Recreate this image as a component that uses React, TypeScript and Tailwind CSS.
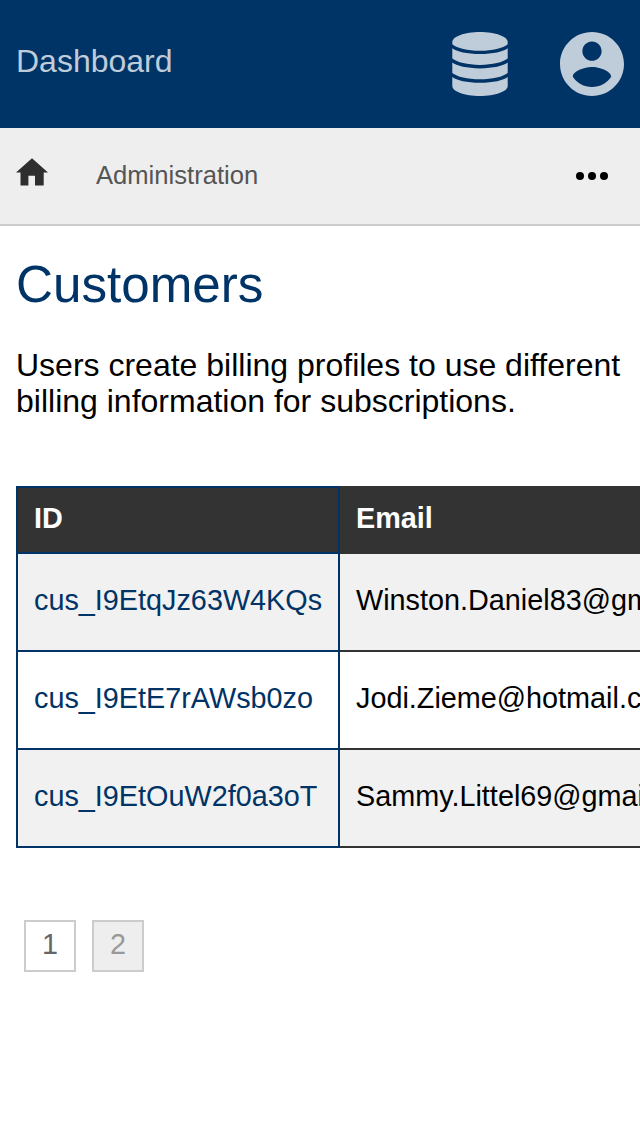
import React from "react";

const customers = [
  { id: "cus_I9EtqJz63W4KQs", email: "Winston.Daniel83@gmail.com" },
  { id: "cus_I9EtE7rAWsb0zo", email: "Jodi.Zieme@hotmail.com" },
  { id: "cus_I9EtOuW2f0a3oT", email: "Sammy.Littel69@gmail.com" },
];

function DatabaseIcon() {
  return (
    <svg viewBox="0 0 56 64" className="h-16 w-14" fill="currentColor">
      <path d="M.3 10C.3 4.500 12.700 0 28 0s27.700 4.500 27.700 10v2.300C51 16.200 40.500 18.800 28 18.800S5 16.200.3 12.300z" />
      <path d="M.3 16.200C4.500 19.600 15 22 28 22s23.500-2.400 27.700-5.800v10.400C51 30.400 40.500 32.900 28 32.900S5 30.400.3 26.600z" />
      <path d="M.3 30.600C4.500 34 15 36.400 28 36.400s23.500-2.400 27.700-5.800v10.400C51 44.800 40.500 47.300 28 47.300S5 44.800.3 41z" />
      <path d="M.3 45C4.500 48.400 15 50.800 28 50.800s23.500-2.400 27.700-5.800v9C55.700 59.500 43.300 64 28 64S.3 59.500.3 54z" />
    </svg>
  );
}

export default function App() {
  return (
    <div className="h-[1136px] w-[640px] overflow-hidden bg-white font-['Liberation_Sans',sans-serif] text-black">
      <header className="flex h-32 items-center justify-between bg-[#003366] px-4 text-[#bfccd9]">
        <a className="pb-1.5 text-[32px] leading-9">Dashboard</a>
        <div className="flex items-center gap-[52px]">
          <DatabaseIcon />
          <svg viewBox="2 2 20 20" className="size-16" fill="currentColor">
            <path d="M12 2C6.48 2 2 6.48 2 12s4.48 10 10 10 10-4.48 10-10S17.52 2 12 2zm0 3c1.66 0 3 1.34 3 3s-1.34 3-3 3-3-1.34-3-3 1.34-3 3-3zm0 14.2c-2.5 0-4.71-1.28-6-3.22.03-1.99 4-3.08 6-3.08 1.99 0 5.97 1.09 6 3.08-1.29 1.94-3.5 3.22-6 3.22z" />
          </svg>
        </div>
      </header>
      <nav className="flex h-[98px] items-center border-b-2 border-[#cccccc] bg-[#eeeeee] px-4">
        <svg viewBox="0 0 32 28" className="mb-2 h-7 w-8 fill-[#2e2e2e]">
          <path d="M12.400 27.600v-9.900H19v9.900h8.700V14.600H32L16 .3 0 14.600h4.500v13z" />
        </svg>
        <span className="mb-0.5 ml-12 text-[25.6px] leading-8 text-[#555555]">Administration</span>
        <svg viewBox="0 0 32 8" className="mr-4 ml-auto h-2 w-8">
          <circle cx="4" cy="4" r="4" />
          <circle cx="16" cy="4" r="4" />
          <circle cx="28" cy="4" r="4" />
        </svg>
      </nav>
      <main className="px-4">
        <h1 className="pt-[29px] text-[51.2px] leading-[60px] text-[#003366]">Customers</h1>
        <p className="mt-8 text-[32px] leading-9">
          Users create billing profiles to use different
          <br />
          billing information for subscriptions.
        </p>
        <div className="mt-[67px] w-[624px] overflow-hidden">
          <table className="w-[760px] table-fixed border-collapse text-left text-[28.8px] leading-8">
            <thead>
              <tr className="h-[66px] bg-[#333333] text-white">
                <th className="w-[322px] border-2 border-[#003366] px-4 pt-0 pb-1 font-bold">ID</th>
                <th className="border-2 border-[#333333] px-4 pt-0 pb-1 font-bold">Email</th>
              </tr>
            </thead>
            <tbody>
              {customers.map((customer) => (
                <tr key={customer.id} className="h-[98px] odd:bg-[#f1f1f1]">
                  <td className="border-2 border-[#003366] px-4 pt-0 pb-1 text-[#003366]">{customer.id}</td>
                  <td className="border-2 border-[#333333] px-4 pt-0 pb-1">{customer.email}</td>
                </tr>
              ))}
            </tbody>
          </table>
        </div>
        <div className="mt-[72px] flex gap-4 px-2 text-[28.8px] leading-8">
          <button className="size-[52px] border-2 border-[#cccccc] pb-1 text-[#666666]">1</button>
          <button className="size-[52px] border-2 border-[#cccccc] bg-[#eeeeee] pb-1 text-[#999999]">2</button>
        </div>
      </main>
    </div>
  );
}
